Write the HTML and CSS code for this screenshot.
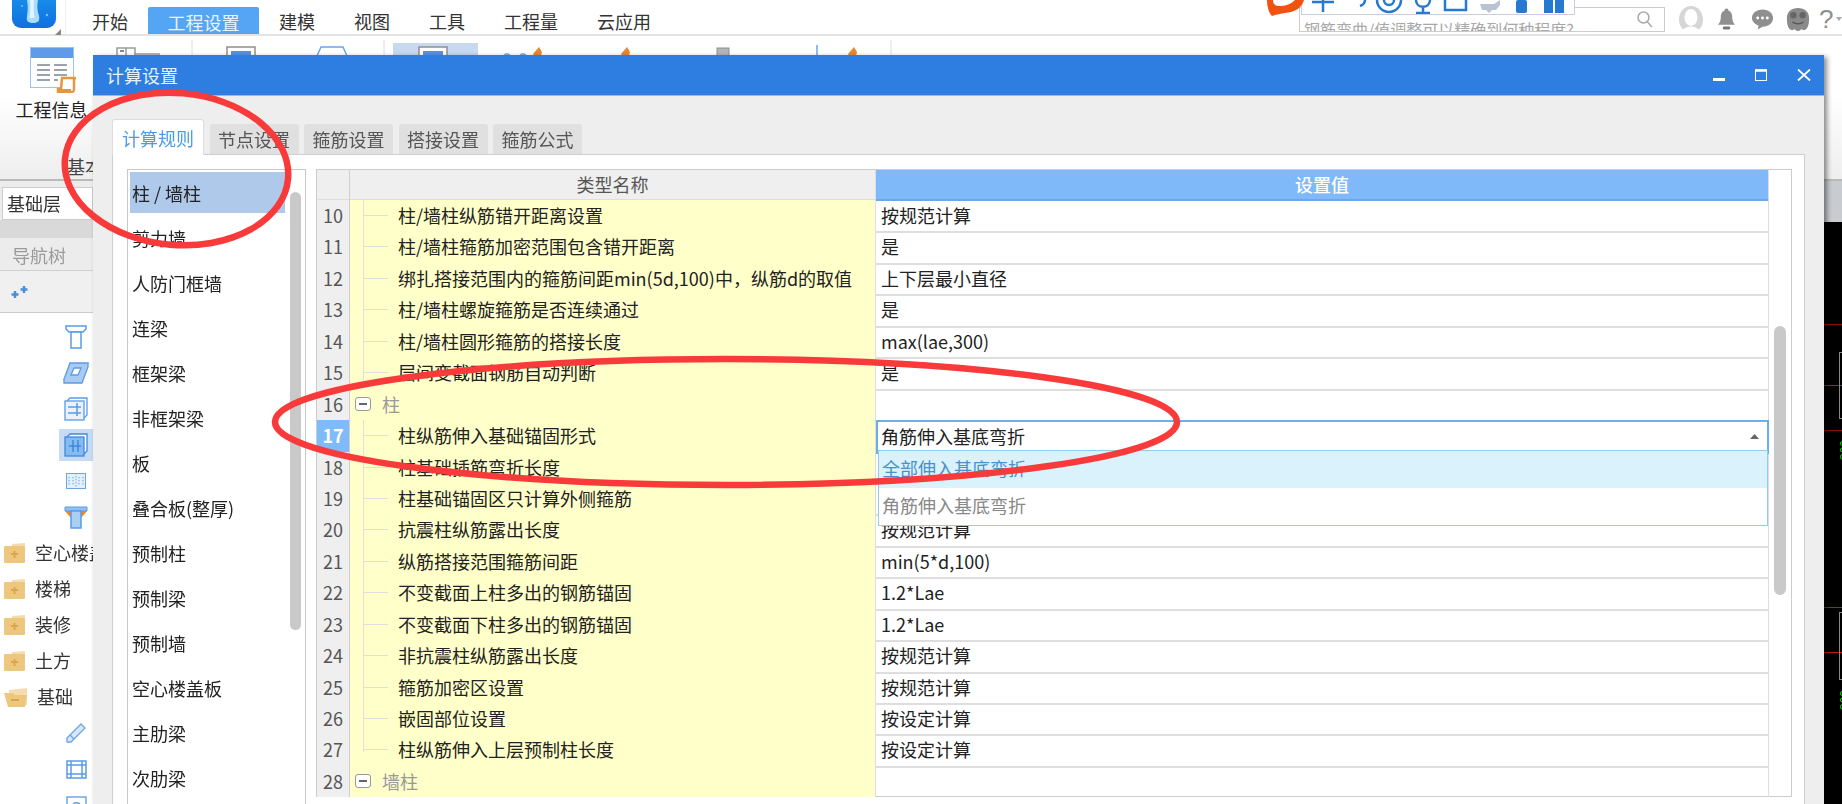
FILE: index.html
```html
<!DOCTYPE html>
<html lang="zh-CN">
<head>
<meta charset="utf-8">
<title>计算设置</title>
<link rel="stylesheet" href="styles.css">
</head>
<body>
<div class="app">
  <header class="topbar">
    <div class="logo-cell">
      <svg class="logo" width="44" height="28" viewBox="0 0 44 28"><defs><linearGradient id="lg" x1="0" y1="0" x2="0" y2="1"><stop offset="0" stop-color="#1a9bf0"/><stop offset="1" stop-color="#0f6fe0"/></linearGradient></defs><rect x="0" y="-16" width="44" height="44" rx="9" fill="url(#lg)"/><path d="M15 0h11c-1 5-1 10 1 16 1 5-1 7-6 7s-7-2-6-7c1-6 1-11 0-16z" fill="#a9dcfb"/><path d="M18 0h4c-.5 6-.5 12 .5 18h-5c1-6 1-12 .5-18z" fill="#e3f4fe"/><circle cx="10" cy="6" r="1" fill="#7cc4f5"/><circle cx="35" cy="15" r="1.200" fill="#7cc4f5"/></svg>
      <svg class="logo-corner" width="6" height="6" viewBox="0 0 6 6"><path d="M6 0v6H0z" fill="#888"/></svg>
    </div>
    <nav class="menu">
      <span class="menu-item">开始</span>
      <span class="menu-item active">工程设置</span>
      <span class="menu-item">建模</span>
      <span class="menu-item">视图</span>
      <span class="menu-item">工具</span>
      <span class="menu-item">工程量</span>
      <span class="menu-item">云应用</span>
    </nav>
    <div class="search">
      <span class="search-text">钢筋弯曲/值调整可以精确到何种程度?</span>
      <svg class="search-icon" width="16" height="17" viewBox="0 0 16 17" fill="none" stroke="#aaa" stroke-width="1.500"><circle cx="6.500" cy="6.500" r="5.500"/><path d="M10.500 11l4.500 5"/></svg>
    </div>
    <div class="top-icons">
      <svg class="ti-avatar" width="24" height="27" viewBox="0 0 24 27"><ellipse cx="12" cy="13.500" rx="12" ry="13.500" fill="#d6d6d6"/><ellipse cx="12" cy="11.500" rx="6.500" ry="8.500" fill="#fff"/><path d="M3 25c3-6 15-6 18 0-4 3-14 3-18 0z" fill="#fff"/></svg>
      <svg class="ti-bell" width="19" height="24" viewBox="0 0 20 24"><path d="M10 1c1.500 0 2 1 2 2 3 1 4 4 4 7 0 4 1 6 3 8H1c2-2 3-4 3-8 0-3 1-6 4-7 0-1 .500-2 2-2z" fill="#8f8f8f"/><rect x="6" y="20" width="8" height="3" rx="1.500" fill="#777"/></svg>
      <svg class="ti-chat" width="23" height="24" viewBox="0 0 24 24"><path d="M12 2c6.500 0 11 3.800 11 9s-4.500 9-11 9l-5 3 1-4c-4-1.500-7-4.500-7-8 0-5.200 4.500-9 11-9z" fill="#8f8f8f"/><circle cx="7" cy="11" r="1.500" fill="#fff"/><circle cx="12" cy="11" r="1.500" fill="#fff"/><circle cx="17" cy="11" r="1.500" fill="#fff"/></svg>
      <svg class="ti-mascot" width="24" height="25" viewBox="0 0 26 25"><path d="M13 0c7 0 12 4 12 11 0 6-1 12-5 13-2 .5-2-1-3-1s-2 2-4 2-3-2-4-2-1 1.500-3 1C2 23 1 17 1 11 1 4 6 0 13 0z" fill="#8a8a8a"/><circle cx="8" cy="8" r="3.500" fill="#666"/><circle cx="18" cy="8" r="3.500" fill="#666"/><path d="M7 15c3 3 9 3 12 0" stroke="#555" stroke-width="1.500" fill="none"/></svg>
      <span class="help">?</span>
      <svg class="ti-drop" width="6" height="4" viewBox="0 0 6 4"><path d="M0 0h6L3 4z" fill="#aaa"/></svg>
    </div>
  </header>

  <section class="ribbon">
    <div class="info-btn">
      <svg width="46" height="46" viewBox="0 0 46 46"><rect x=".5" y=".5" width="43" height="40" fill="#fff" stroke="#9cc2ef"/><rect x="1" y="1" width="42" height="10" fill="#5f9be8"/><path d="M7 18h13M24 18h13M7 23h13M24 23h13M7 28h13M24 28h13M7 33h13M24 33h4" stroke="#9aa3ab" stroke-width="2"/><path d="M32 31h13l-1 2v9c0 3-1 3-3 3H28v-3h3z" fill="#fff" stroke="#e8963a" stroke-width="2.500"/><rect x="28" y="42" width="13" height="3" fill="#e8963a"/></svg>
      <span class="info-label">工程信息</span>
      <span class="group-label">基本设置</span>
    </div>
    <svg class="ribbon-strip" width="810" height="22" viewBox="93 36 810 22" fill="none">
      <path d="M192 40v18M384 40v18M891 40v18" stroke="#dcdcdc"/>
      <rect x="393" y="43" width="85" height="15" fill="#c7d8ef"/>
      <path d="M117 56V48h18v8M126 48v8M135 54h24v4" stroke="#9a9a9a" stroke-width="1.500"/>
      <rect x="120" y="50" width="4" height="2" fill="#888"/>
      <rect x="227" y="47" width="28" height="12" fill="#fff" stroke="#8f8f8f" stroke-width="1.500"/>
      <rect x="231" y="51" width="20" height="8" fill="#4f94e8"/>
      <path d="M316 58l5-11h22l5 11" fill="#fff" stroke="#6ea4e6" stroke-width="1.500"/>
      <rect x="419" y="47" width="28" height="12" fill="#fff" stroke="#8f8f8f" stroke-width="1.500"/>
      <rect x="423" y="51" width="20" height="8" fill="#4f94e8"/>
      <circle cx="507" cy="58" r="4" stroke="#6ea4e6" stroke-width="1.500"/>
      <circle cx="523" cy="58" r="4" stroke="#6ea4e6" stroke-width="1.500"/>
      <path d="M539 47l3 5-1 4h-7l-1-2z" fill="#ee8433"/>
      <path d="M627 47l3 5-1 4h-7l-1-2z" fill="#ee8433"/>
      <rect x="717" y="48" width="12" height="11" fill="#b5b5b5" stroke="#8f8f8f"/>
      <path d="M817 45v14" stroke="#6ea4e6" stroke-width="1.500"/>
      <path d="M854 47l3 5-1 4h-7l-1-2z" fill="#ee8433"/>
    </svg>
  </section>

  <div class="workspace">
    <aside class="nav">
      <div class="combo">基础层</div>
      <div class="nav-gap"></div>
      <div class="nav-title">导航树</div>
      <div class="nav-tools">
        <svg width="20" height="14" viewBox="0 0 20 14"><path d="M5 6v7M1.500 9.500h7M14 1v7M10.500 4.500h7" stroke="#4a8edc" stroke-width="2.500"/></svg>
      </div>
      <div class="tree">
        <div class="leaf"><svg width="22" height="24" viewBox="0 0 22 24" fill="#fff" stroke="#5b9be6" stroke-width="1.500"><path d="M1 1h20v3l-3 3H4L1 4z"/><path d="M6 7h10v16H6z"/></svg></div>
        <div class="leaf"><svg width="26" height="22" viewBox="0 0 26 22" fill="#a9cbf2" stroke="#5b9be6" stroke-width="1.300"><path d="M7 1h18l-6 16H1z"/><path d="M1 17v4h18l6-16v-4"/><path d="M11 6h7l-3 7H8z" fill="#fff"/></svg></div>
        <div class="leaf"><svg width="24" height="24" viewBox="0 0 24 24" fill="#fff" stroke="#5b9be6" stroke-width="1.300"><path d="M3 4l3-3h17v17l-3 3"/><rect x="1" y="4" width="19" height="19" fill="#eaf3fd"/><path d="M4 10h13M4 16h13M13 6v13" stroke-width="1.500"/></svg></div>
        <div class="leaf selected"><svg width="24" height="24" viewBox="0 0 24 24" fill="#fff" stroke="#3f88e0" stroke-width="1.300"><path d="M3 4l3-3h17v17l-3 3"/><rect x="1" y="4" width="19" height="19" fill="#86bbf0"/><path d="M9 7v12M14 7v12M5 13h12" stroke-width="1.500"/></svg></div>
        <div class="leaf"><svg width="20" height="16" viewBox="0 0 20 16" fill="#e6f0fb" stroke="#6ea4e6" stroke-width="1"><rect x=".5" y=".5" width="19" height="15"/><path d="M10 0v16M3 4v8M7 4v8M13 4v8M17 4v8" stroke-dasharray="1.500 1.500"/></svg></div>
        <div class="leaf"><svg width="24" height="23" viewBox="0 0 24 23"><path d="M1 1h22v4l-6 7V6H7v6L1 5z" fill="#f5831f"/><path d="M1 1h22v4H1z" fill="#8fc0f3" stroke="#5b9be6"/><path d="M7 5h10v17H7z" fill="#a9cff5" stroke="#5b9be6" stroke-width="1.500"/></svg></div>
        <div class="folder"><svg class="fold-icon" width="22" height="20" viewBox="0 0 22 20"><path d="M8 1l13-1v4H8z" fill="#f4dcae"/><rect y="3" width="21" height="17" rx="1" fill="#eec77f"/><path d="M7 11h7M10.500 8v7" stroke="#d9a64d" stroke-width="2"/></svg><span>空心楼盖板</span></div>
        <div class="folder"><svg class="fold-icon" width="22" height="20" viewBox="0 0 22 20"><path d="M8 1l13-1v4H8z" fill="#f4dcae"/><rect y="3" width="21" height="17" rx="1" fill="#eec77f"/><path d="M7 11h7M10.500 8v7" stroke="#d9a64d" stroke-width="2"/></svg><span>楼梯</span></div>
        <div class="folder"><svg class="fold-icon" width="22" height="20" viewBox="0 0 22 20"><path d="M8 1l13-1v4H8z" fill="#f4dcae"/><rect y="3" width="21" height="17" rx="1" fill="#eec77f"/><path d="M7 11h7M10.500 8v7" stroke="#d9a64d" stroke-width="2"/></svg><span>装修</span></div>
        <div class="folder"><svg class="fold-icon" width="22" height="20" viewBox="0 0 22 20"><path d="M8 1l13-1v4H8z" fill="#f4dcae"/><rect y="3" width="21" height="17" rx="1" fill="#eec77f"/><path d="M7 11h7M10.500 8v7" stroke="#d9a64d" stroke-width="2"/></svg><span>土方</span></div>
        <div class="folder"><svg class="fold-icon" width="24" height="20" viewBox="0 0 24 20"><path d="M5 3l18-2v17H5z" fill="#f4dcae"/><path d="M0 6h9l2 2h12l-2 12H4z" fill="#eec77f"/><path d="M7 13h8" stroke="#d9a64d" stroke-width="2"/></svg><span>基础</span></div>
        <div class="leaf"><svg width="20" height="20" viewBox="0 0 20 20" fill="#d8e8fa" stroke="#6ea4e6" stroke-width="1.300"><path d="M1 15L15 1l4 4L5 19H1z"/><path d="M4 12l4 4"/></svg></div>
        <div class="leaf"><svg width="21" height="19" viewBox="0 0 21 19" fill="none" stroke="#5b9be6" stroke-width="1.500"><rect x="1" y="1" width="19" height="17"/><rect x="5" y="5" width="11" height="9"/><path d="M1 5h4M16 5h4M1 14h4M16 14h4M5 1v4M16 1v4M5 14v4M16 14v4"/></svg></div>
        <div class="leaf"><svg width="21" height="19" viewBox="0 0 21 19" fill="none" stroke="#5b9be6" stroke-width="1.300"><rect x="1" y="1" width="19" height="17"/><path d="M7 9c0-3 7-3 7 0"/></svg></div>
      </div>
    </aside>
    <main class="canvas">
      <div class="canvas-head"></div>
      <div class="canvas-body">
        <i class="cad-line l1"></i><i class="cad-line l2"></i><i class="cad-line l3"></i><i class="cad-line l4"></i><i class="cad-line l5"></i>
        <i class="cad-box b1"></i><i class="cad-box b2"></i>
        <span class="cad-dim d1">800</span><span class="cad-dim d2">800</span>
      </div>
    </main>
  </div>
</div>

<div class="float-bar">
  <svg class="float-logo" width="38" height="16" viewBox="0 0 38 16"><path d="M0 0h6c0 4 2 6 7 6 6 0 11-2 15-6h9c-2 8-9 12-19 13-4 .5-9 1.500-13 3-3-3-5-9-5-16z" fill="#f2510f"/></svg>
  <div class="float-tools">
    <svg width="270" height="14" viewBox="1303 0 270 14" fill="none" stroke="#2579d0" stroke-width="2.500">
      <path d="M1313 2h22M1324 0v12"/>
      <path d="M1366 0c0 3-2 5-5 6"/>
      <circle cx="1390" cy="0" r="12"/><circle cx="1390" cy="0" r="5"/>
      <path d="M1424 8v4M1417 13h14M1417 0c0 9 14 9 14 0"/>
      <rect x="1446" y="-4" width="21" height="14"/>
      <path d="M1481 4h14l6-4v5l-4 5h-4l-3 3-3-3h-4z" fill="#b9c4d2" stroke="none"/>
      <rect x="1517" y="0" width="11" height="13" rx="2" fill="#2579d0" stroke="none"/>
      <path d="M1545 0h9v13h-9zM1556 0h9v13h-9z" fill="#2579d0" stroke="none"/>
    </svg>
  </div>
</div>

<section class="dialog">
  <header class="dialog-head">
    <span class="dialog-title">计算设置</span>
    <div class="win-btns">
      <svg width="12" height="12" viewBox="0 0 12 12"><rect y="9" width="12" height="3" fill="#fff"/></svg>
      <svg width="12" height="12" viewBox="0 0 12 12" fill="none" stroke="#fff"><rect x=".5" y="1" width="11" height="10.500" stroke-width="1"/><path d="M0 1.500h12" stroke-width="2.500"/></svg>
      <svg width="14" height="12" viewBox="0 0 14 12" fill="none" stroke="#fff" stroke-width="1.800"><path d="M1 .5l12 11M13 .5l-12 11"/></svg>
    </div>
  </header>
  <div class="dialog-body">
    <div class="tabs">
      <span class="tab active">计算规则</span>
      <span class="tab">节点设置</span>
      <span class="tab">箍筋设置</span>
      <span class="tab">搭接设置</span>
      <span class="tab">箍筋公式</span>
    </div>
    <div class="panel">
      <div class="list">
        <div class="list-items">
          <div class="list-item selected">柱 / 墙柱</div>
          <div class="list-item">剪力墙</div>
          <div class="list-item">人防门框墙</div>
          <div class="list-item">连梁</div>
          <div class="list-item">框架梁</div>
          <div class="list-item">非框架梁</div>
          <div class="list-item">板</div>
          <div class="list-item">叠合板(整厚)</div>
          <div class="list-item">预制柱</div>
          <div class="list-item">预制梁</div>
          <div class="list-item">预制墙</div>
          <div class="list-item">空心楼盖板</div>
          <div class="list-item">主肋梁</div>
          <div class="list-item">次肋梁</div>
        </div>
        <div class="list-scroll"><div class="list-thumb"></div></div>
      </div>
      <div class="grid">
        <div class="table">
          <div class="row head"><div class="num"></div><div class="name">类型名称</div><div class="val">设置值</div></div>
          <div class="row"><div class="num">10</div><div class="name"><i class="branch"></i>柱/墙柱纵筋错开距离设置</div><div class="val">按规范计算</div></div>
          <div class="row"><div class="num">11</div><div class="name"><i class="branch"></i>柱/墙柱箍筋加密范围包含错开距离</div><div class="val">是</div></div>
          <div class="row"><div class="num">12</div><div class="name"><i class="branch"></i>绑扎搭接范围内的箍筋间距min(5d,100)中，纵筋d的取值</div><div class="val">上下层最小直径</div></div>
          <div class="row"><div class="num">13</div><div class="name"><i class="branch"></i>柱/墙柱螺旋箍筋是否连续通过</div><div class="val">是</div></div>
          <div class="row"><div class="num">14</div><div class="name"><i class="branch"></i>柱/墙柱圆形箍筋的搭接长度</div><div class="val">max(lae,300)</div></div>
          <div class="row"><div class="num">15</div><div class="name"><i class="branch"></i>层间变截面钢筋自动判断</div><div class="val">是</div></div>
          <div class="row"><div class="num">16</div><div class="name group"><i class="minus"></i>柱</div><div class="val"></div></div>
          <div class="row current"><div class="num">17</div><div class="name"><i class="branch"></i>柱纵筋伸入基础锚固形式</div>
            <div class="val editor">角筋伸入基底弯折<svg class="caret" width="9" height="5" viewBox="0 0 9 5"><path d="M0 5l4.500-5L9 5z" fill="#666"/></svg>
              <div class="dropdown">
                <div class="option hot">全部伸入基底弯折</div>
                <div class="option">角筋伸入基底弯折</div>
              </div>
            </div>
          </div>
          <div class="row"><div class="num">18</div><div class="name"><i class="branch"></i>柱基础插筋弯折长度</div><div class="val"></div></div>
          <div class="row"><div class="num">19</div><div class="name"><i class="branch"></i>柱基础锚固区只计算外侧箍筋</div><div class="val"></div></div>
          <div class="row"><div class="num">20</div><div class="name"><i class="branch"></i>抗震柱纵筋露出长度</div><div class="val">按规范计算</div></div>
          <div class="row"><div class="num">21</div><div class="name"><i class="branch"></i>纵筋搭接范围箍筋间距</div><div class="val">min(5*d,100)</div></div>
          <div class="row"><div class="num">22</div><div class="name"><i class="branch"></i>不变截面上柱多出的钢筋锚固</div><div class="val">1.2*Lae</div></div>
          <div class="row"><div class="num">23</div><div class="name"><i class="branch"></i>不变截面下柱多出的钢筋锚固</div><div class="val">1.2*Lae</div></div>
          <div class="row"><div class="num">24</div><div class="name"><i class="branch"></i>非抗震柱纵筋露出长度</div><div class="val">按规范计算</div></div>
          <div class="row"><div class="num">25</div><div class="name"><i class="branch"></i>箍筋加密区设置</div><div class="val">按规范计算</div></div>
          <div class="row"><div class="num">26</div><div class="name"><i class="branch"></i>嵌固部位设置</div><div class="val">按设定计算</div></div>
          <div class="row"><div class="num">27</div><div class="name"><i class="branch last"></i>柱纵筋伸入上层预制柱长度</div><div class="val">按设定计算</div></div>
          <div class="row"><div class="num">28</div><div class="name group"><i class="minus"></i>墙柱</div><div class="val"></div></div>
        </div>
        <div class="vscroll"><div class="vthumb"></div></div>
      </div>
    </div>
  </div>
</section>

<svg class="marks" width="1842" height="804" viewBox="0 0 1842 804" fill="none" stroke="#f93a3a" stroke-width="6.500">
  <ellipse cx="176.500" cy="169" rx="112" ry="76" transform="rotate(5 176.500 169)"/>
  <ellipse cx="726" cy="422" rx="451" ry="63"/>
</svg>
</body>
</html>
```
FILE: styles.css
```css
* { box-sizing: border-box; }
html, body { margin: 0; padding: 0; }
body {
  width: 1842px;
  height: 804px;
  overflow: hidden;
  position: relative;
  background: #fff;
  color: #222;
  font: 18px/1.2 "Noto Sans CJK SC", "Noto Sans", sans-serif;
}
.app, .float-bar, .dialog { filter: blur(.45px); }

/* application shell */
.app { display: flex; flex-direction: column; height: 804px; }
.topbar {
  height: 36px;
  flex: none;
  display: flex;
  border-bottom: 2px solid #e4e4e4;
  background: #fff;
}
.logo-cell { width: 66px; flex: none; padding: 0 0 0 12px; border-right: 1px solid #eee; position: relative; }
.logo { display: block; }
.logo-corner { position: absolute; left: 55px; top: 29px; }
.menu { display: flex; margin-left: 8px; flex: none; width: 1225px; }
.menu-item { height: 34px; padding: 8px 0 0; color: #333; line-height: 26px; margin-right: 39px; }
.menu-item:first-child { margin-left: 18px; margin-right: 20px; }
.menu-item.active {
  width: 111px; margin-top: 7px; height: 27px; padding: 2px 0 0; line-height: 26px; text-align: center;
  background: #55a5f5; color: #e8f4ff; border-radius: 2px 2px 0 0; margin-right: 20px;
}
.search {
  position: relative;
  width: 366px; height: 25px; margin-top: 7px; flex: none;
  border: 1px solid #ccc; background: #fff; overflow: hidden;
  font-size: 16px; color: #a8a8a8; padding: 10px 0 0 4px; line-height: 22px;
}
.search-text { white-space: nowrap; }
.search-icon { position: absolute; right: 11px; top: 3px; }
.top-icons { display: flex; align-items: center; margin-left: 14px; height: 34px; padding-top: 4px; flex: none; }
.top-icons svg { flex: none; display: block; }
.ti-bell { margin-left: 14px; }
.ti-chat { margin-left: 15px; }
.ti-mascot { margin-left: 12px; }
.help { color: #8e8e8e; font: 26px/1 "Liberation Sans", sans-serif; margin-left: 9px; width: 14px; flex: none; }
.ti-drop { margin-left: 3px; }

.ribbon {
  height: 145px; flex: none;
  display: flex;
  background: linear-gradient(#fff 0, #fff 40%, #eee 100%);
  border-bottom: 2px solid #b9b9b9;
}
.info-btn { width: 93px; flex: none; display: flex; flex-direction: column; align-items: center; padding-top: 11px; overflow: hidden; }
.info-btn svg { flex: none; margin-left: 13px; }
.info-label { white-space: nowrap; margin-top: 4px; color: #222; margin-left: 10px; line-height: 24px; }
.group-label { white-space: nowrap; align-self: flex-start; margin: 33px 0 0 67px; color: #444; line-height: 24px; }
.ribbon-strip { display: block; }

.workspace { flex: 1; min-height: 0; display: flex; }
.nav { width: 94px; flex: none; background: #ececec; overflow: hidden; border-right: 1px solid #c9d4e4; padding-top: 6px; display: flex; flex-direction: column; }
.combo { height: 33px; margin-left: 2px; background: #fff; border: 1px solid #ccc; padding-left: 4px; line-height: 31px; white-space: nowrap; color: #333; flex: none; }
.nav-gap { height: 18px; background: #d9d9d9; flex: none; }
.nav-title { height: 33px; padding-left: 12px; line-height: 34px; color: #9a9a9a; flex: none; border-bottom: 1px solid #d0d0d0; }
.nav-tools { height: 42px; flex: none; padding: 14px 0 0 10px; background: #f0f0f0; border-bottom: 1px solid #ccc; }
.nav-tools svg { display: block; }
.tree { flex: 1; min-height: 0; background: #fff; padding-top: 6px; }
.leaf { height: 36px; display: flex; align-items: center; justify-content: center; width: 34px; margin-left: 59px; }
.leaf.selected { background: #c7dcf4; height: 32px; margin-top: 2px; margin-bottom: 2px; }
.folder { height: 36px; display: flex; align-items: center; padding-left: 4px; white-space: nowrap; color: #333; }
.fold-icon { flex: none; margin-right: 9px; }

.canvas { flex: 1; display: flex; flex-direction: column; }
.canvas-head { height: 41px; background: #c8ccd1; flex: none; }
.canvas-body { flex: 1; background: #000; position: relative; overflow: hidden; }
.cad-line { position: absolute; left: 0; right: 0; height: 1px; background: #8c0f0f; }
.cad-line.l1 { top: 102px; } .cad-line.l2 { top: 163px; background: #c81414; } .cad-line.l3 { top: 208px; }
.cad-line.l4 { top: 385px; background: #c81414; } .cad-line.l5 { top: 430px; background: #c81414; }
.cad-box { position: absolute; left: 1745px; width: 6px; border: 1px solid #888; }
.cad-box.b1 { top: 130px; height: 67px; } .cad-box.b2 { top: 390px; height: 68px; }
.cad-dim { position: absolute; left: 1744px; color: #0c0; font-size: 12px; transform: rotate(-90deg); transform-origin: 0 0; line-height: 1; }
.cad-dim.d1 { top: 238px; } .cad-dim.d2 { top: 488px; }

/* floating toolbar caught in the screenshot */
.float-bar { position: absolute; left: 1267px; top: 0; display: flex; }
.float-logo { display: block; position: relative; z-index: 1; }
.float-tools { width: 274px; height: 15px; margin-left: -4px; background: #fff; border: 1px solid #ccd; border-top: 0; }
.float-tools svg { display: block; }

/* dialog */
.dialog {
  position: absolute; left: 93px; top: 55px; width: 1731px; height: 749px;
  display: flex; flex-direction: column;
  background: #eee;
  box-shadow: 3px 2px 5px rgba(0,0,0,.45);
}
.dialog-head {
  height: 41px; flex: none;
  background: #2d7ee0;
  border-bottom: 1px solid #8fbcf0;
  display: flex; align-items: center; justify-content: space-between;
  color: #e6f1ff;
  padding: 0 13px 0 13px;
}
.dialog-title { line-height: 24px; }
.win-btns { display: flex; gap: 30px; align-items: center; }
.win-btns svg { display: block; }
.dialog-body { flex: 1; min-height: 0; display: flex; flex-direction: column; padding: 23px 19px 0; }
.tabs { display: flex; align-items: flex-end; gap: 5.500px; height: 35px; flex: none; position: relative; z-index: 1; }
.tab { width: 89px; height: 30px; background: #e0e0e0; color: #555; text-align: center; line-height: 30px; border-radius: 3px 3px 0 0; }
.tab.active { width: 92px; height: 36px; margin-bottom: -1px; background: #fff; color: #4a9bef; line-height: 36px; border: 1px solid #ddd; border-bottom: 0; }
.panel {
  flex: 1; min-height: 0;
  display: flex; align-items: flex-start; gap: 10px;
  background: #fff;
  border: 1px solid #cfcfcf; border-bottom: 0;
  padding: 14px 14px 0 14px;
}
.list {
  width: 179px; height: 640px; flex: none;
  display: flex;
  border: 1px solid #c8c8c8; border-bottom: 0;
  padding: 2px 0 0 2px;
  overflow: hidden;
}
.list-items { width: 155px; flex: none; }
.list-item { height: 41px; margin-bottom: 4px; padding-left: 2px; line-height: 42px; white-space: nowrap; color: #222; }
.list-item.selected { background: #afc9ea; }
.list-scroll { flex: 1; padding: 20px 0 0 5px; }
.list-thumb { width: 11px; height: 438px; border-radius: 6px; background: #c9c9c9; }

.grid { width: 1476px; flex: none; display: flex; border: 1px solid #ccc; }
.table { width: 1452px; flex: none; }
.vscroll { flex: 1; padding: 156px 0 0 5px; }
.vthumb { width: 12px; height: 269px; border-radius: 6px; background: #c9c9c9; }
.row { display: grid; grid-template-columns: 33px 526px 893px; height: 31.450px; line-height: 31.450px; }
.row.head { height: 30px; line-height: 29px; }
.row:last-child { height: 30px; }
.num, .name, .val { border-bottom: 2px solid #dedede; }
.row:last-child .num, .row:last-child .name, .row:last-child .val { border-bottom: 0; }
.num { background: #efefef; border-right: 1px solid #cfcfcf; text-align: center; color: #555; white-space: nowrap; }
.name { background: #ffffc9; border-right: 1px solid #dedede; padding-left: 48px; position: relative; white-space: nowrap; }
.val { padding-left: 5px; white-space: nowrap; border-right: 1px solid #dedede; }
.row.head .name { background: #efefef; padding: 0; text-align: center; color: #555; }
.row.head .val { background: #7fb9f9; color: #fff; text-align: center; padding: 0; font-weight: 500; border-bottom-color: #6ba8ea; }
.row.current .num { background: #7fbafa; color: #fff; font-weight: 700; }
.branch { position: absolute; left: 13px; top: 0; bottom: -2px; width: 25px; border-left: 1px solid #dfdfdf; }
.branch::after { content: ""; position: absolute; left: 0; top: 15px; width: 24px; height: 1px; background: #dfdfdf; }
.branch.last { bottom: 14px; }
.group { color: #999; padding-left: 32px; }
.minus {
  position: absolute; left: 5px; top: 8px; width: 16px; height: 14px;
  border: 1px solid #999; border-radius: 3px; background: #fff;
}
.minus::after { content: ""; position: absolute; left: 3px; top: 5px; width: 8px; height: 2px; background: #666; }
.editor { position: relative; border: 2px solid #6aaeef; padding-left: 3px; line-height: 29px; }
.caret { position: absolute; right: 8px; top: 12px; }
.dropdown {
  position: absolute; left: 0; top: 28px; width: 890px; height: 76px;
  background: #fff; border: 1px solid #8fcdec; z-index: 2; color: #888;
}
.option { height: 37px; padding-left: 3px; line-height: 35px; }
.option.hot { background: #d9f2fb; color: #4a90c8; }

/* red hand-drawn marks */
.marks { position: absolute; left: 0; top: 0; pointer-events: none; }
```
